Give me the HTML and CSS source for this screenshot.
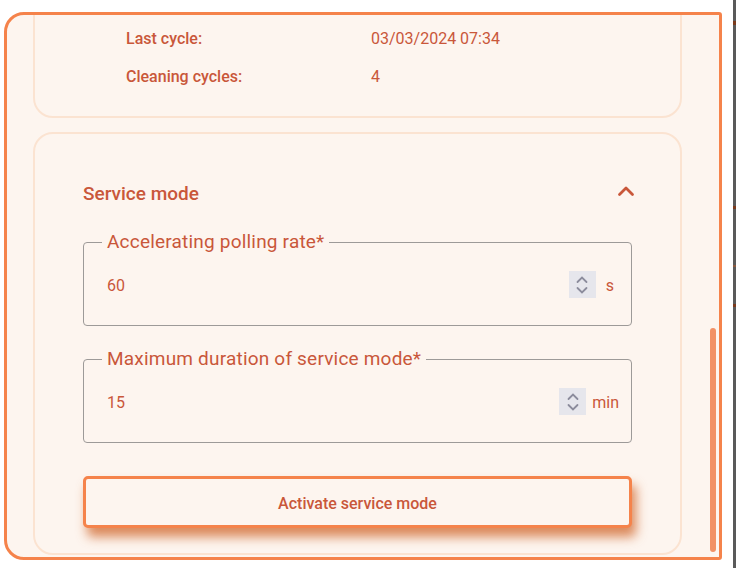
FILE: index.html
```html
<!DOCTYPE html>
<html lang="en">
<head>
<meta charset="utf-8">
<title>Service mode</title>
<link rel="stylesheet" href="styles.css">
</head>
<body>
<div class="frame">
  <div class="scroll">
    <section class="card info">
      <div class="info-grid">
        <span class="info-label">Last cycle:</span>
        <span class="info-value">03/03/2024 07:34</span>
        <span class="info-label">Cleaning cycles:</span>
        <span class="info-value">4</span>
      </div>
    </section>
    <section class="card service">
      <div class="service-head">
        <h2 class="service-title">Service mode</h2>
        <svg class="collapse-icon" width="18" height="12" viewBox="0 0 18 12"><path d="M2.5 9.5 L9 3 L15.5 9.5" fill="none" stroke="#c9573a" stroke-width="2.8" stroke-linecap="round" stroke-linejoin="round"/></svg>
      </div>
      <fieldset class="field field-first">
        <legend class="field-legend">Accelerating polling rate*</legend>
        <div class="field-row field-row-s">
          <span class="field-value">60</span>
          <span class="spin">
            <svg width="14" height="22" viewBox="0 0 14 22"><path d="M2.5 8 L7 3.5 L11.5 8" fill="none" stroke="#8c8c9c" stroke-width="1.8" stroke-linecap="round"/><path d="M2.5 14 L7 18.5 L11.5 14" fill="none" stroke="#8c8c9c" stroke-width="1.8" stroke-linecap="round"/></svg>
          </span>
          <span class="unit unit-s">s</span>
        </div>
      </fieldset>
      <fieldset class="field">
        <legend class="field-legend">Maximum duration of service mode*</legend>
        <div class="field-row field-row-min">
          <span class="field-value">15</span>
          <span class="spin">
            <svg width="14" height="22" viewBox="0 0 14 22"><path d="M2.5 8 L7 3.5 L11.5 8" fill="none" stroke="#8c8c9c" stroke-width="1.8" stroke-linecap="round"/><path d="M2.5 14 L7 18.5 L11.5 14" fill="none" stroke="#8c8c9c" stroke-width="1.8" stroke-linecap="round"/></svg>
          </span>
          <span class="unit unit-min">min</span>
        </div>
      </fieldset>
      <button class="activate" type="button">Activate service mode</button>
    </section>
  </div>
  <div class="thumb"></div>
</div>
<div class="edge"></div>
</body>
</html>
```
FILE: styles.css
```css
* { box-sizing: border-box; }

html, body {
  margin: 0;
  padding: 0;
  background: #ffffff;
  height: 568px;
  overflow: hidden;
}

body {
  display: flex;
  align-items: flex-start;
  font-family: Roboto, "Liberation Sans", Arial, sans-serif;
  color: #c9573a;
}

.frame {
  position: relative;
  margin: 12px 0 0 4px;
  width: 718px;
  height: 548px;
  border: 3px solid #f5834b;
  border-radius: 20px 3px 3px 20px;
  background: #fdf5ef;
  overflow: hidden;
}

.scroll {
  margin-top: -35px;
  padding: 0 37px 0 26px;
  display: flex;
  flex-direction: column;
  gap: 14px;
}

.card {
  border: 2px solid #fbe3d1;
  border-radius: 20px;
  background: #fdf5ef;
}

.info {
  padding: 47px 0 29px 91px;
}

.info-grid {
  display: grid;
  grid-template-columns: 245px auto;
  row-gap: 18px;
  font-size: 16px;
  line-height: 20px;
}

.info-label { font-weight: 500; }
.info-value { font-weight: 400; }

.service {
  padding: 48px 48px 25px;
  display: flex;
  flex-direction: column;
}

.service-head {
  display: flex;
  align-items: center;
  justify-content: space-between;
  height: 22px;
  margin-top: 1px;
  margin-bottom: 26px;
}

.service-title {
  margin: 0;
  font-size: 19px;
  line-height: 22px;
  font-weight: 500;
}

.collapse-icon {
  margin-right: -3px;
  margin-top: -6px;
}

.field {
  margin: 0;
  padding: 0 0 8px 0;
  border: 1px solid #9d9a98;
  border-radius: 4px;
  min-width: 0;
}

.field-first { margin-bottom: 22px; }

.field-legend {
  margin-left: 18px;
  padding: 0 5px;
  font-size: 19px;
  line-height: 22px;
  font-weight: 400;
  letter-spacing: 0.2px;
}

.field-row {
  display: flex;
  align-items: center;
  height: 64px;
  padding-left: 23px;
  font-size: 16px;
}

.field-row-s { padding-right: 17px; }
.field-row-min { padding-right: 12px; }

.field-value {
  flex: 1;
  margin-top: 1px;
}

.spin {
  width: 27px;
  height: 27px;
  margin-top: -1px;
  background: #e6e6ec;
  display: flex;
  align-items: center;
  justify-content: center;
}

.unit { margin-top: 1px; }
.unit-s { margin-left: 10px; }
.unit-min { margin-left: 6px; }

.activate {
  margin-top: 33px;
  height: 52px;
  padding: 3px 0 0;
  border: 3px solid #f5834b;
  border-radius: 5px;
  background: #fdf5ef;
  color: #c9573a;
  font-family: Roboto, "Liberation Sans", Arial, sans-serif;
  font-size: 16px;
  font-weight: 500;
  line-height: 20px;
  box-shadow: 4px 9px 11px rgba(205, 92, 30, 0.7);
  cursor: pointer;
}

.thumb {
  position: absolute;
  left: 703px;
  top: 313px;
  width: 6px;
  height: 224px;
  border-radius: 3px;
  background: #f29165;
}

.edge {
  margin-left: 11px;
  width: 3px;
  height: 568px;
  background: linear-gradient(to bottom,
    #5a5a5a 0, #5a5a5a 21px, #7a3a1c 21px, #7a3a1c 25px,
    #5a5a5a 25px, #5a5a5a 206px, #7a3a1c 206px, #7a3a1c 209px,
    #5a5a5a 209px, #5a5a5a 265px, #8a5a40 265px, #8a5a40 267px,
    #5a5a5a 267px, #5a5a5a 304px, #7a3a1c 304px, #7a3a1c 307px,
    #5a5a5a 307px);
}
```
